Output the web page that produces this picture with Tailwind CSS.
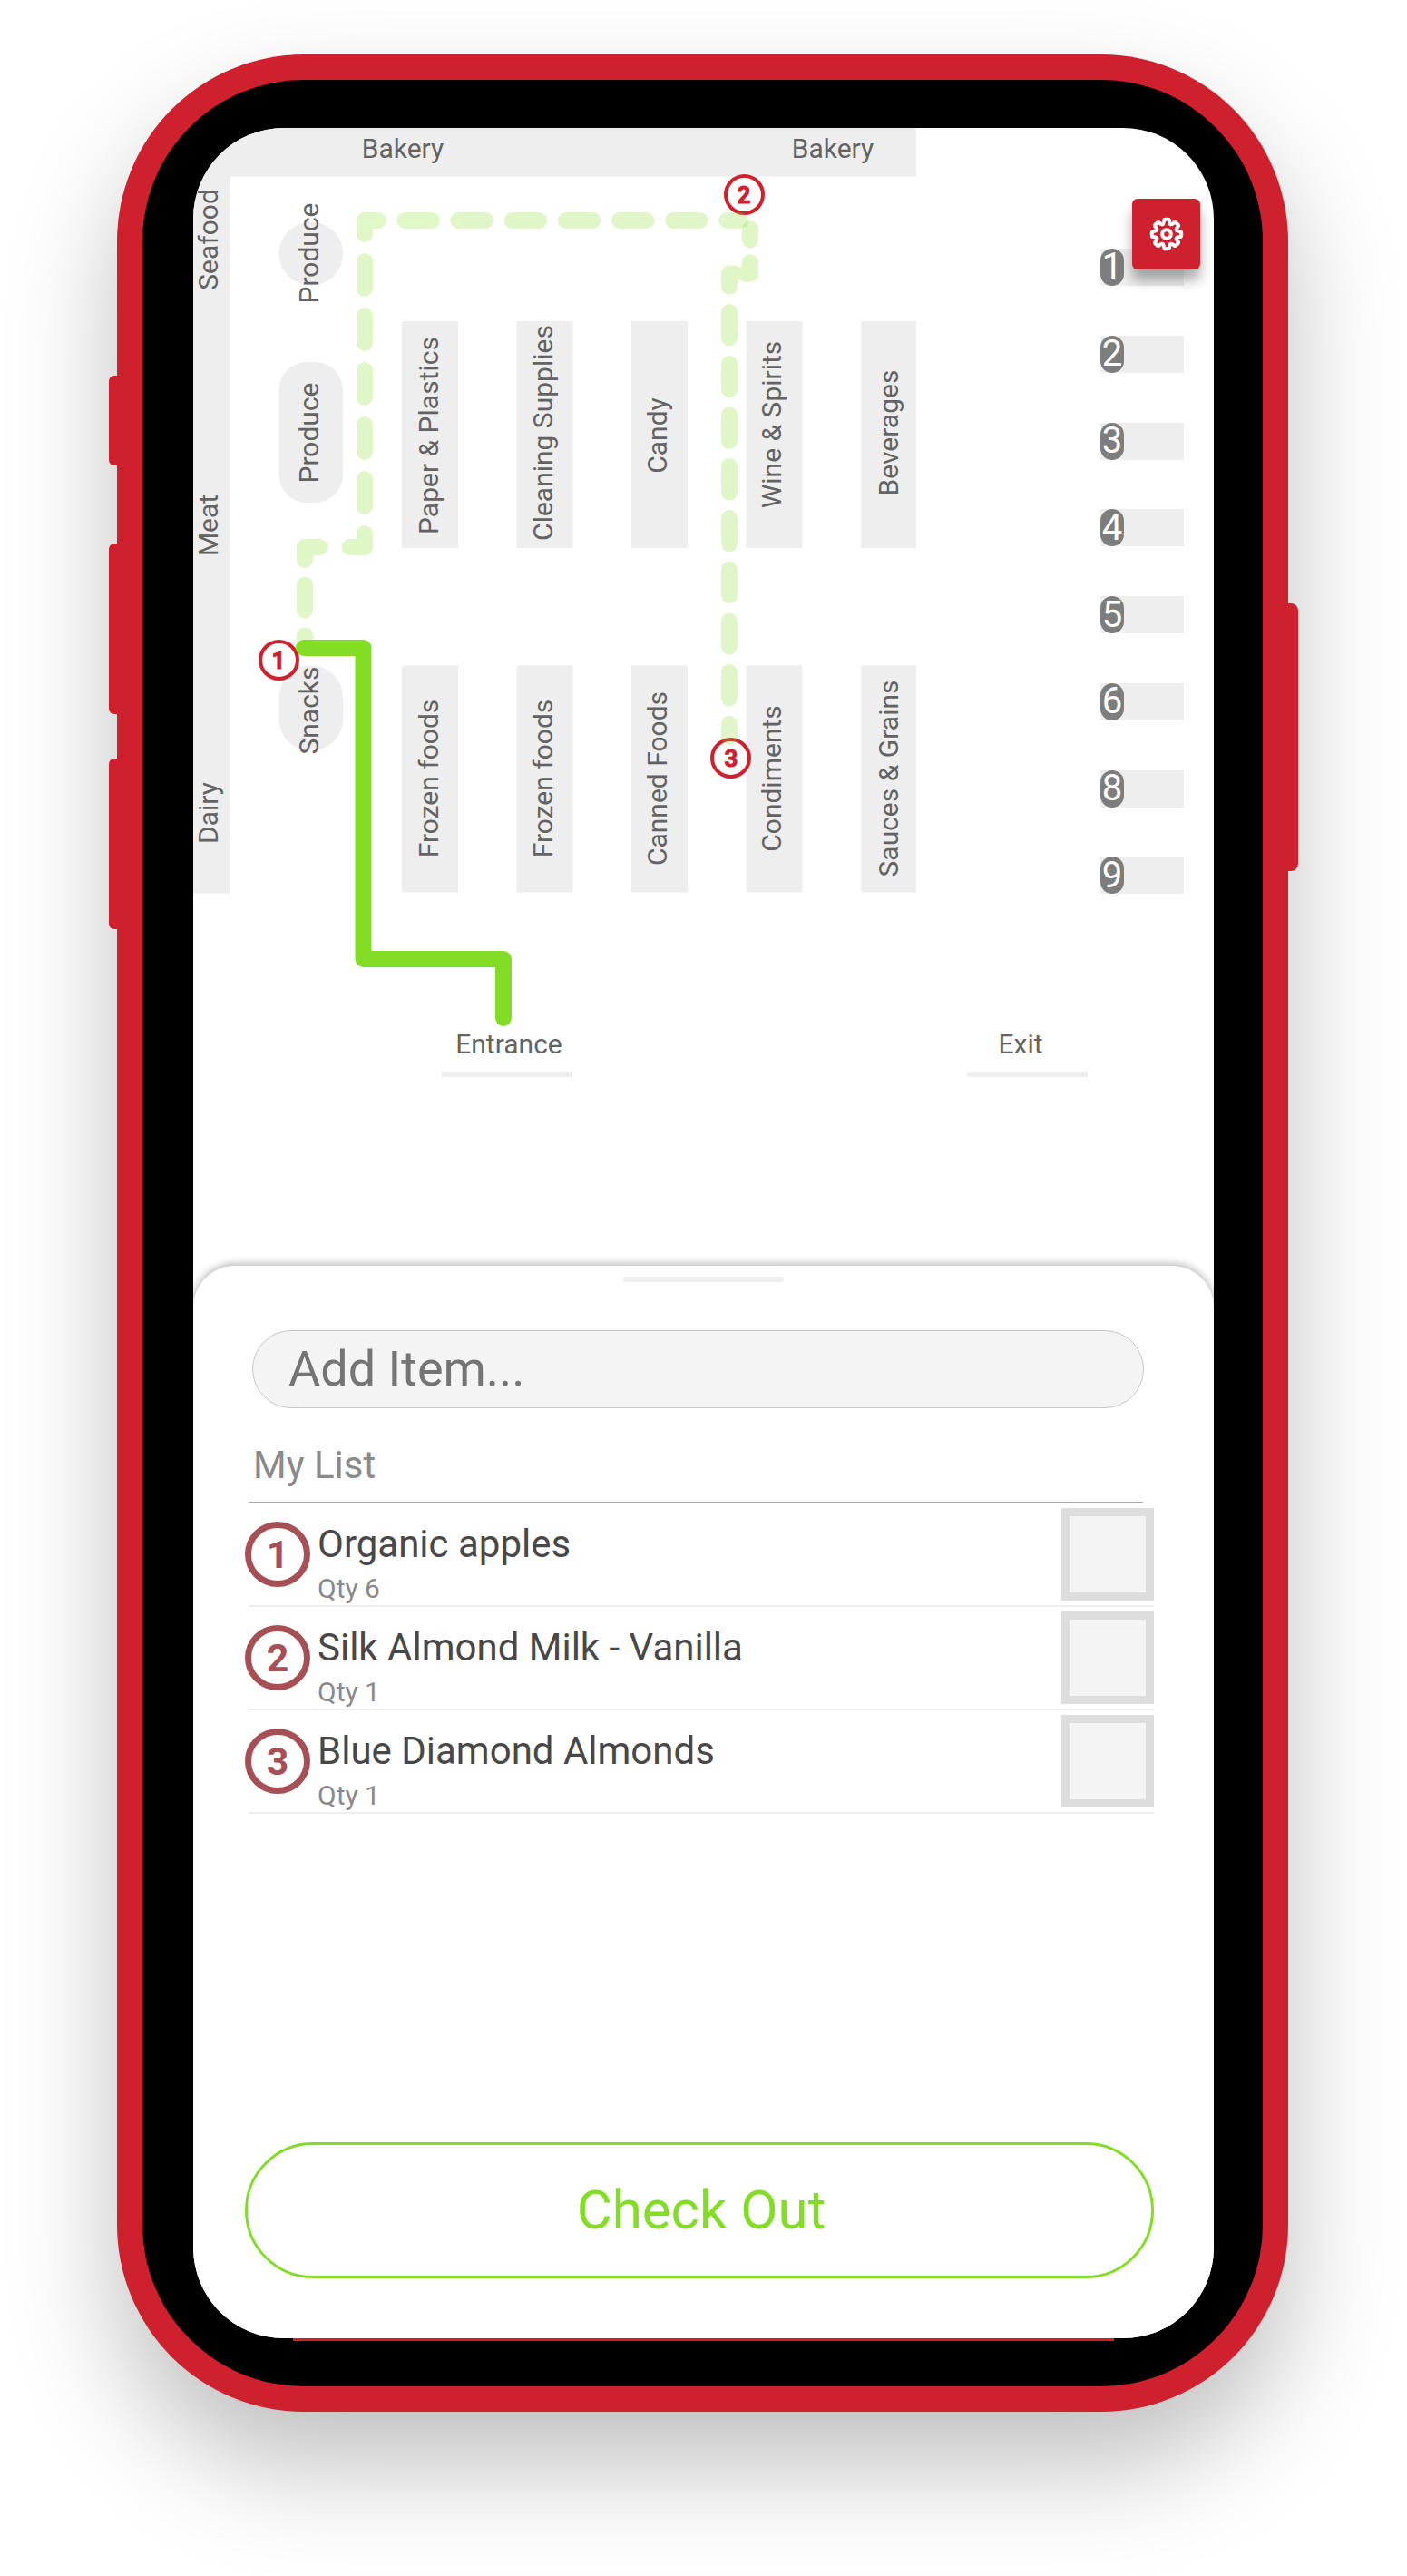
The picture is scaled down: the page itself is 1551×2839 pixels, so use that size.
<!DOCTYPE html>
<html lang="en">
<head>
<meta charset="utf-8">
<meta name="viewport" content="width=device-width, initial-scale=1">
<title>Store Map</title>
<script src="https://cdn.jsdelivr.net/npm/@tailwindcss/browser@4"></script>
</head>
<body class="bg-white font-[Roboto,sans-serif]">
<main class="pt-[60px] pb-[180px] pl-[129px] pr-[131px]">
  <!-- Phone case -->
  <div class="relative rounded-[206px] bg-[#cf202e] p-7 shadow-[0_60px_120px_rgba(0,0,0,0.25)]">
    <!-- Side keys -->
    <span class="absolute top-[354px] -left-[9px] h-[99px] w-5 rounded-md bg-[#cf202e]"></span>
    <span class="absolute top-[539px] -left-[9px] h-[188px] w-5 rounded-md bg-[#cf202e]"></span>
    <span class="absolute top-[776px] -left-[9px] h-[188px] w-5 rounded-md bg-[#cf202e]"></span>
    <span class="absolute top-[605px] -right-[11px] h-[295px] w-5 rounded-lg bg-[#cf202e]"></span>

    <div class="relative rounded-[178px] bg-black pt-[53px] pr-[54px] pb-[50px] pl-[56px]">
      <div class="relative overflow-hidden rounded-[100px] bg-white">

        <!-- Floor plan -->
        <section aria-label="Store map">
          <svg class="block h-auto w-full" viewBox="213 141 1125 1254" font-family="Roboto, sans-serif" font-size="30" fill="#636363" text-anchor="middle" role="img" aria-label="Route through the store">
            <g fill="#eee">
              <path d="M213 141H1010V194.500H254V984.500H213Z"/>
              <rect x="307.500" y="244.500" width="70.500" height="70" rx="35"/>
              <rect x="307.500" y="399" width="70.500" height="155" rx="31"/>
              <rect x="307.500" y="733.500" width="70.500" height="94" rx="35"/>
              <rect x="443" y="354" width="62" height="250"/>
              <rect x="569.500" y="354" width="62" height="250"/>
              <rect x="696" y="354" width="62" height="250"/>
              <rect x="822.500" y="354" width="62" height="250"/>
              <rect x="949" y="354" width="61" height="250"/>
              <rect x="443" y="733.500" width="62" height="250"/>
              <rect x="569.500" y="733.500" width="62" height="250"/>
              <rect x="696" y="733.500" width="62" height="250"/>
              <rect x="822.500" y="733.500" width="62" height="250"/>
              <rect x="949" y="733.500" width="61" height="250"/>
              <rect x="1213" y="274" width="92" height="41"/>
              <rect x="1213" y="370" width="92" height="41"/>
              <rect x="1213" y="466" width="92" height="41"/>
              <rect x="1213" y="561" width="92" height="41"/>
              <rect x="1213" y="657" width="92" height="41"/>
              <rect x="1213" y="753" width="92" height="41"/>
              <rect x="1213" y="849" width="92" height="41"/>
              <rect x="1213" y="944" width="92" height="41"/>
              <rect x="487" y="1181" width="144" height="6"/>
              <rect x="1066" y="1181" width="133" height="6"/>
            </g>
            <g fill="#7d7d7d">
              <rect x="1213" y="274" width="26" height="41" rx="13"/>
              <rect x="1213" y="370" width="26" height="41" rx="13"/>
              <rect x="1213" y="466" width="26" height="41" rx="13"/>
              <rect x="1213" y="561" width="26" height="41" rx="13"/>
              <rect x="1213" y="657" width="26" height="41" rx="13"/>
              <rect x="1213" y="753" width="26" height="41" rx="13"/>
              <rect x="1213" y="849" width="26" height="41" rx="13"/>
              <rect x="1213" y="944" width="26" height="41" rx="13"/>
            </g>
            <g fill="#fff" font-size="40">
              <text x="1226" y="307">1</text>
              <text x="1226" y="403">2</text>
              <text x="1226" y="499">3</text>
              <text x="1226" y="595">4</text>
              <text x="1226" y="691">5</text>
              <text x="1226" y="786">6</text>
              <text x="1226" y="882">8</text>
              <text x="1226" y="978">9</text>
            </g>
            <text x="444" y="174">Bakery</text>
            <text x="918" y="174">Bakery</text>
            <text x="561" y="1161">Entrance</text>
            <text x="1125" y="1161">Exit</text>
            <text transform="translate(240 264) rotate(-90)">Seafood</text>
            <text transform="translate(240 579) rotate(-90)">Meat</text>
            <text transform="translate(240 896) rotate(-90)">Dairy</text>
            <text transform="translate(351 279) rotate(-90)">Produce</text>
            <text transform="translate(351 477) rotate(-90)">Produce</text>
            <text transform="translate(351 783) rotate(-90)">Snacks</text>
            <text transform="translate(483 480) rotate(-90)">Paper &amp; Plastics</text>
            <text transform="translate(609 477) rotate(-90)">Cleaning Supplies</text>
            <text transform="translate(735 480) rotate(-90)">Candy</text>
            <text transform="translate(861 468) rotate(-90)">Wine &amp; Spirits</text>
            <text transform="translate(990 477) rotate(-90)">Beverages</text>
            <text transform="translate(483 858) rotate(-90)">Frozen foods</text>
            <text transform="translate(609 858) rotate(-90)">Frozen foods</text>
            <text transform="translate(735 858) rotate(-90)">Canned Foods</text>
            <text transform="translate(861 858) rotate(-90)">Condiments</text>
            <text transform="translate(990 858) rotate(-90)">Sauces &amp; Grains</text>

            <!-- Stops -->
            <g fill="#fff" stroke="#cf202e" stroke-width="4">
              <circle cx="307.500" cy="727.500" r="20.500"/>
              <circle cx="820.500" cy="214.500" r="20.500"/>
              <circle cx="805.500" cy="835.500" r="20.500"/>
            </g>
            <g fill="#cf202e" stroke="#cf202e" stroke-width="1" stroke-linejoin="round" font-size="26" font-weight="700">
              <text x="307" y="737">1</text>
              <text x="820" y="224">2</text>
              <text x="806" y="845">3</text>
            </g>

            <!-- Upcoming legs; pathLength counts dashes, so each side starts and ends on half a dash -->
            <g opacity=".25" fill="none" stroke="#83dd26" stroke-width="18" stroke-linecap="round" stroke-dasharray="1 1" stroke-dashoffset=".5">
              <path pathLength="14" d="M402 243H816"/>
              <path pathLength="12" d="M402 243V603"/>
              <path pathLength="2" d="M402 603H336"/>
              <path pathLength="4" d="M336 603V714"/>
            </g>
            <g opacity=".25" fill="none" stroke="#83dd26" stroke-width="18" stroke-linecap="round" stroke-dasharray="1 1" stroke-dashoffset=".5">
              <path pathLength="2" d="M827 252V301.500"/>
              <path pathLength="2" d="M827 301.500H804"/>
              <path pathLength="18" d="M804 301.500V812"/>
            </g>
            <!-- Current leg -->
            <path d="M335 714H400.500V1057H555V1122" fill="none" stroke="#83dd26" stroke-width="18" stroke-linecap="round" stroke-linejoin="round"/>
          </svg>
        </section>

        <button type="button" aria-label="Settings" class="absolute top-[78px] right-[15px] flex h-[78px] w-[75px] items-center justify-center rounded-md bg-[#cf202e] shadow-[0_12px_14px_rgba(0,0,0,0.32)]">
          <svg class="size-10" viewBox="-20 -20 40 40" fill="none" stroke="#fff" stroke-width="4" stroke-linecap="round" stroke-linejoin="round" aria-hidden="true">
            <defs>
              <path id="tooth" d="M-4.500-10.800Q-3.500-11.400-3.200-13.200L-3-14.800Q-2.800-16.200-1.400-16.200H1.400Q2.800-16.200 3-14.800L3.200-13.200Q3.500-11.400 4.500-10.800"/>
            </defs>
            <use href="#tooth"/>
            <use href="#tooth" transform="rotate(45)"/>
            <use href="#tooth" transform="rotate(90)"/>
            <use href="#tooth" transform="rotate(135)"/>
            <use href="#tooth" transform="rotate(180)"/>
            <use href="#tooth" transform="rotate(225)"/>
            <use href="#tooth" transform="rotate(270)"/>
            <use href="#tooth" transform="rotate(315)"/>
            <circle r="4.800"/>
          </svg>
        </button>

        <!-- Shopping list sheet -->
        <section class="relative rounded-t-[46px] bg-white pt-3 pr-[66px] pb-[66px] pl-[61px] shadow-[0_-2px_10px_rgba(0,0,0,0.3)]">
          <div class="flex justify-center pl-[5px]">
            <span class="h-1.5 w-[177px] rounded-full bg-[#eee]"></span>
          </div>
          <form class="mt-[53px] ml-1 mr-[11px] flex">
            <input type="text" aria-label="Add item" placeholder="Add Item..." class="h-[86px] w-full rounded-full border border-[#c8c8c8] bg-[#f4f4f4] pr-10 pb-0.5 pl-[39px] text-[54px] leading-[64px] text-[#444] placeholder:text-[#757575]">
          </form>
          <h2 class="mt-[39px] mr-3 border-b border-[#a9a9a9] pb-4 pl-[5px] text-[42px] leading-[48px] text-[#8a8a8a]">My List</h2>
          <ul class="pt-px">
            <li class="flex h-[114px] items-center gap-2 border-b-2 border-[#eee]">
              <span class="-ml-1 flex size-[72px] shrink-0 items-center justify-center rounded-full border-[7px] border-[#a65055] text-[43px] leading-none font-bold text-[#a65055]">1</span>
              <label for="item-1" class="flex grow flex-col gap-[7px] self-end">
                <span class="text-[42px] leading-[48px] text-[#484848]">Organic apples</span>
                <span class="text-[30px] leading-9 text-[#8a8a8a]">Qty 6</span>
              </label>
              <input id="item-1" type="checkbox" class="size-[102px] shrink-0 appearance-none border-[9px] border-[#ddd] bg-[#f4f4f4] checked:bg-[#83dd26]">
            </li>
            <li class="flex h-[114px] items-center gap-2 border-b-2 border-[#eee]">
              <span class="-ml-1 flex size-[72px] shrink-0 items-center justify-center rounded-full border-[7px] border-[#a65055] text-[43px] leading-none font-bold text-[#a65055]">2</span>
              <label for="item-2" class="flex grow flex-col gap-[7px] self-end">
                <span class="text-[42px] leading-[48px] text-[#484848]">Silk Almond Milk - Vanilla</span>
                <span class="text-[30px] leading-9 text-[#8a8a8a]">Qty 1</span>
              </label>
              <input id="item-2" type="checkbox" class="size-[102px] shrink-0 appearance-none border-[9px] border-[#ddd] bg-[#f4f4f4] checked:bg-[#83dd26]">
            </li>
            <li class="flex h-[114px] items-center gap-2 border-b-2 border-[#eee]">
              <span class="-ml-1 flex size-[72px] shrink-0 items-center justify-center rounded-full border-[7px] border-[#a65055] text-[43px] leading-none font-bold text-[#a65055]">3</span>
              <label for="item-3" class="flex grow flex-col gap-[7px] self-end">
                <span class="text-[42px] leading-[48px] text-[#484848]">Blue Diamond Almonds</span>
                <span class="text-[30px] leading-9 text-[#8a8a8a]">Qty 1</span>
              </label>
              <input id="item-3" type="checkbox" class="size-[102px] shrink-0 appearance-none border-[9px] border-[#ddd] bg-[#f4f4f4] checked:bg-[#83dd26]">
            </li>
          </ul>
          <div class="mt-[362px] -ml-1 flex">
            <button type="button" class="h-[150px] w-full rounded-full border-3 border-[#83dd26] bg-white pl-1 text-[60px] leading-[72px] text-[#83dd26]">Check Out</button>
          </div>
        </section>
      </div>
      <div class="mx-[110px] h-[3px] bg-[#cf202e]"></div>
    </div>
  </div>
</main>
</body>
</html>
